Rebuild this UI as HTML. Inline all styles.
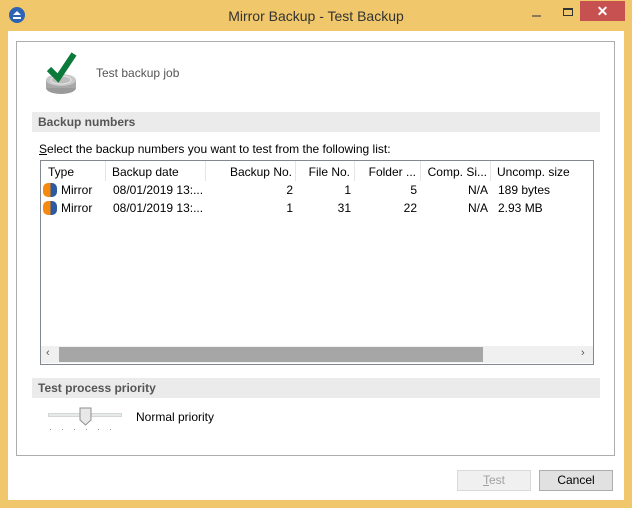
<!DOCTYPE html>
<html><head><style>
*{margin:0;padding:0;box-sizing:border-box}
body{width:632px;height:508px;background:#f0c76b;font-family:"Liberation Sans",sans-serif;font-size:12px;color:#000;position:relative;overflow:hidden}
.a{position:absolute}
.sec{position:absolute;left:32px;width:568px;height:20px;background:#ebebeb;color:#555;font-weight:bold;padding:3px 0 0 6px;font-size:12px}
.r{text-align:right}
.hd{position:absolute;top:0;height:20px;border-right:1px solid #e5e5e5;padding-top:4px}
</style></head><body>
<svg class="a" style="left:8px;top:6px" width="18" height="18"><circle cx="9" cy="9" r="8" fill="#2c63b4"/><path d="M5 9 L9 5 L13 9Z" fill="#fff"/><rect x="5" y="11" width="8" height="2" fill="#fff"/></svg>
<div class="a" style="left:0;width:632px;top:8px;text-align:center;font-size:14px;color:#333">Mirror Backup - Test Backup</div>
<div class="a" style="left:532px;top:15px;width:9px;height:2px;background:#8a7a55"></div>
<div class="a" style="left:563px;top:8px;width:10px;height:8px;border:1px solid #333;border-top-width:2px"></div>
<div class="a" style="left:580px;top:1px;width:45px;height:20px;background:#c75050;color:#fff;text-align:center;font-size:14px;font-weight:bold;line-height:20px">✕</div>
<div class="a" style="left:8px;top:31px;width:616px;height:469px;background:#fff"></div>
<div class="a" style="left:16px;top:41px;width:599px;height:415px;border:1px solid #adadad;background:#fff"></div>
<svg class="a" style="left:44px;top:50px" width="40" height="48">
<ellipse cx="17" cy="38" rx="15" ry="6" fill="#9a9a9a"/><rect x="2" y="30" width="30" height="8" fill="#a8a8a8"/><ellipse cx="17" cy="30" rx="15" ry="6" fill="#c8c8c8"/><ellipse cx="17" cy="30" rx="10" ry="4" fill="#bdbdbd" stroke="#e6e6e6"/>
<path d="M5 19 L14 28 L30 4" stroke="#0b7a3b" stroke-width="6" fill="none"/></svg>
<div class="a" style="left:96px;top:66px;color:#555;font-size:12px">Test backup job</div>
<div class="sec" style="top:112px">Backup numbers</div>
<div class="a" style="left:39px;top:142px"><u>S</u>elect the backup numbers you want to test from the following list:</div>
<div class="a" style="left:40px;top:160px;width:554px;height:205px;border:1px solid #828790;background:#fff">
 <div class="hd" style="left:0;width:65px;padding-left:7px">Type</div>
 <div class="hd" style="left:65px;width:100px;padding-left:6px">Backup date</div>
 <div class="hd r" style="left:165px;width:90px;padding-right:3px">Backup No.</div>
 <div class="hd r" style="left:255px;width:59px;padding-right:4px">File No.</div>
 <div class="hd r" style="left:314px;width:66px;padding-right:4px">Folder ...</div>
 <div class="hd r" style="left:380px;width:70px;padding-right:3px">Comp. Si...</div>
 <div class="hd" style="left:450px;width:102px;padding-left:6px;border:none">Uncomp. size</div>
 <div class="a" style="top:21px;left:0;width:552px">
  <div style="position:relative;height:18px">
   <span class="a" style="left:2px;top:1px;width:14px;height:14px;border-radius:5px;background:linear-gradient(90deg,#f7890f 55%,#2d5aa0 55%)"></span>
   <span class="a" style="left:20px;top:1px">Mirror</span><span class="a" style="left:72px;top:1px">08/01/2019 13:...</span>
   <span class="a r" style="left:165px;width:87px;top:1px">2</span><span class="a r" style="left:255px;width:55px;top:1px">1</span><span class="a r" style="left:314px;width:62px;top:1px">5</span><span class="a r" style="left:380px;width:67px;top:1px">N/A</span><span class="a" style="left:457px;top:1px">189 bytes</span>
  </div>
  <div style="position:relative;height:18px">
   <span class="a" style="left:2px;top:1px;width:14px;height:14px;border-radius:5px;background:linear-gradient(90deg,#f7890f 55%,#2d5aa0 55%)"></span>
   <span class="a" style="left:20px;top:1px">Mirror</span><span class="a" style="left:72px;top:1px">08/01/2019 13:...</span>
   <span class="a r" style="left:165px;width:87px;top:1px">1</span><span class="a r" style="left:255px;width:55px;top:1px">31</span><span class="a r" style="left:314px;width:62px;top:1px">22</span><span class="a r" style="left:380px;width:67px;top:1px">N/A</span><span class="a" style="left:457px;top:1px">2.93 MB</span>
  </div>
 </div>
 <div class="a" style="left:0;top:185px;width:552px;height:17px;background:#f0f0f0"></div>
 <div class="a" style="left:18px;top:186px;width:424px;height:15px;background:#a6a6a6"></div>
 <div class="a" style="left:5px;top:186px;color:#555;font-size:11px">‹</div>
 <div class="a" style="left:540px;top:186px;color:#555;font-size:11px">›</div>
</div>
<div class="sec" style="top:378px">Test process priority</div>
<div class="a" style="left:48px;top:413px;width:74px;height:4px;background:#e7eaea;border:1px solid #d6d6d6"></div>
<svg class="a" style="left:79px;top:407px" width="14" height="20"><path d="M1 1 H12 V13 L6.5 18 L1 13Z" fill="#e8e8e8" stroke="#8f8f8f"/></svg>
<div class="a" style="left:50px;top:429px;width:70px;height:1px;background:repeating-linear-gradient(90deg,#999 0 1px,transparent 1px 12px)"></div>
<div class="a" style="left:136px;top:410px">Normal priority</div>
<div class="a" style="left:457px;top:470px;width:74px;height:21px;border:1px solid #d9d9d9;background:#f0f0f0;color:#a0a0a0;text-align:center;line-height:19px"><u>T</u>est</div>
<div class="a" style="left:539px;top:470px;width:74px;height:21px;border:1px solid #adadad;background:#e1e1e1;text-align:center;line-height:19px">Cancel</div>
</body></html>
